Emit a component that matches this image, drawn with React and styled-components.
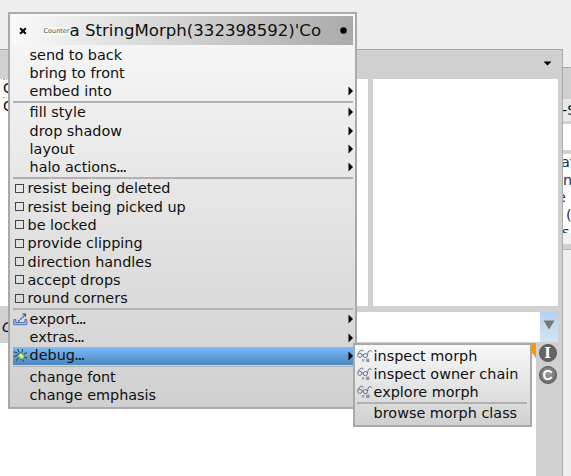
import React from "react";
import styled, { createGlobalStyle, css } from "styled-components";

const Global = createGlobalStyle`
  * { box-sizing: border-box; }
  html, body { margin: 0; height: 476px; overflow: hidden; background: #eeeeee; }
  body { font-family: "DejaVu Sans", sans-serif; color: #101010; }
  svg { display: block; flex: none; }
`;

const Desktop = styled.main`
  position: relative;
  width: 571px;
  height: 476px;
  overflow: hidden;
  background: #eeeeee;
`;

const BackWindow = styled.section`
  position: absolute;
  left: 555px;
  top: 67px;
  width: 30px;
  height: 183px;
  padding-left: 8px;
  border-top: 1px solid #aaaaaa;
  border-bottom: 1px solid #b5b5b5;
  background: #d0d0d0;
  display: grid;
  grid-template-rows: 31px 22px 3px 26px 4px 79px 11px;
  font-size: 14.4px;
`;

const BackPane = styled.div`
  background: ${(p) => p.$fill};
  overflow: hidden;
  white-space: pre;
  line-height: 22px;
`;

const TabLabel = styled.div`
  margin-left: -1px;
`;

const CodeLine = styled.div`
  line-height: 17.5px;
  height: 17.5px;
  margin-left: ${(p) => p.$shift || 0}px;
  color: #17304f;
`;

const CodeQuote = styled.span`
  color: #d7a83a;
`;

const Browser = styled.section`
  position: absolute;
  left: -4px;
  top: 49px;
  width: 567px;
  height: 440px;
  border-top: 1px solid #a8a8a8;
  border-right: 1px solid #aaaaaa;
  background: #d0d0d0;
`;

const BrowserTitle = styled.header`
  height: 29px;
  display: flex;
  align-items: center;
  justify-content: flex-end;
  padding: 0 10px 2px 0;
`;

const Panes = styled.div`
  display: grid;
  grid-template-columns: 372px 185px;
  gap: 5px;
  height: 227px;
`;

const Pane = styled.div`
  background: #ffffff;
  padding-left: ${(p) => (p.$list ? 7 : 0)}px;
`;

const ListEntry = styled.div`
  height: 18px;
  width: 30px;
  border-top: 1px dotted #aaaaaa;
  font-size: 14.4px;
  line-height: 17px;
`;

const SearchRow = styled.div`
  display: grid;
  grid-template-columns: 200px 344px 18px;
  height: 37px;
  padding: 6px 0 5px;
  font-size: 14.4px;
  font-style: italic;
`;

const SearchLabel = styled.div`
  padding-left: 6px;
  line-height: 30px;
`;

const SearchInput = styled.div`
  background: #ffffff;
`;

const DropButton = styled.div`
  display: grid;
  place-items: center;
  padding-bottom: 4px;
  background: linear-gradient(#b2d2f4, #d6e4f0);
`;

const Editor = styled.div`
  display: grid;
  grid-template-columns: 540px 26px;
  height: 145px;
`;

const CodeArea = styled.div`
  background: linear-gradient(#f8fbff, #ffffff 24px);
  display: flex;
  justify-content: flex-end;
`;

const SideButtons = styled.div`
  display: flex;
  flex-direction: column;
  align-items: center;
  gap: 4px;
  padding: 1px 3px 0 0;
`;

const menuFrame = css`
  position: absolute;
  border: 2px solid #a9a9a9;
  background: linear-gradient(#f8f8f8, #d0d0d0);
  display: flex;
  flex-direction: column;
  gap: 1px;
`;

const Menu = styled.section`
  ${menuFrame}
  left: 8px;
  top: 12px;
  width: 349px;
  height: 397px;
  padding: 2px 2px 0 3px;
`;

const Submenu = styled.section`
  ${menuFrame}
  left: 353px;
  top: 343px;
  width: 179px;
  height: 84px;
  padding: 2px 3px 0 2px;
`;

const MenuTitle = styled.header`
  height: 29px;
  flex: none;
  display: flex;
  align-items: center;
  padding: 0 6px;
  background: linear-gradient(90deg, #f9f9f9, #aaaaaa);
  white-space: nowrap;
`;

const Thumbnail = styled.span`
  font-size: 6.5px;
  color: #555555;
  background: #f6f6f6;
  margin-left: 16.5px;
  width: 26px;
  line-height: 8px;
`;

const TitleText = styled.h1`
  flex: 1;
  margin: 0;
  font-size: 16.6px;
  font-weight: 400;
  line-height: 28px;
`;

const Row = styled.div`
  height: 17.33px;
  flex: none;
  display: flex;
  align-items: center;
  white-space: nowrap;
  font-size: 14.4px;
  line-height: 17px;
  background: ${(p) => (p.$active ? "linear-gradient(#7dbdfb, #4a86c0)" : "none")};
`;

const IconSlot = styled.span`
  width: ${(p) => (p.$check ? 14.5 : 16.6)}px;
  flex: none;
`;

const Label = styled.span`
  flex: 1;
  padding-top: 1.2px;
`;

const Ellipsis = styled.span`
  font-size: 9.6px;
  font-weight: bold;
`;

const CheckBox = styled.span`
  display: block;
  width: 9px;
  height: 9px;
  margin-left: 2px;
  border: 1px solid #444444;
`;

const Separator = styled.div`
  flex: none;
  height: 1.67px;
  background: #b1b1b1;
`;

const RightArrow = () => (
  <svg width="5" height="10" viewBox="0 0 5 10"><path d="M.5 .5 5 5 .5 9.5Z" fill="#000" /></svg>
);

const ExportIcon = () => (
  <svg width="15" height="13" viewBox="0 0 15 13" fill="none">
    <path d="M.8 6.5h2v3h9v-3h2v5.2H.8Z" fill="#a9c1e6" stroke="#4d75b2" />
    <path d="m5 8.6 6.5-6" stroke="#31578d" strokeWidth="1.4" strokeDasharray="2 1" />
    <path d="M9 .6h4v4Z" fill="#31578d" />
  </svg>
);

const BugIcon = () => (
  <svg width="15" height="15" viewBox="0 0 15 15" fill="none">
    <path d="M4.5 5 .8 3.8M4 7.5.6 8.6M5 10l-2 3M6 4 4.6 1M9 4.5 9.6 1M11 6l3-1.5M11 9l3 1M9 11l1.5 2.6" stroke="#293d38" />
    <ellipse cx="8.2" cy="8.2" rx="4" ry="3.1" transform="rotate(40 8.2 8.2)" fill="#91c86d" stroke="#4c784b" strokeWidth=".8" />
    <ellipse cx="8.2" cy="7.9" rx="2.2" ry="1.4" transform="rotate(40 8.2 7.9)" fill="#dcf5bd" />
    <path d="M4.5 7.2 7.3 4.8" stroke="#466b48" />
  </svg>
);

const GlassesIcon = () => (
  <svg width="15" height="14" viewBox="0 0 15 14" fill="none" stroke="#5a7190" strokeWidth=".95">
    <circle cx="2.8" cy="6.3" r="2.1" />
    <circle cx="8.4" cy="6.6" r="2.1" />
    <path d="M.9 5.2C1.7 2.7 4 .7 5.4 1.1c.7.2.7.9.3 1.6M4.9 6l1.4.2M10.5 6.6c.2-2.7.7-5 2.3-5 1.2 0 1.6.7 1.5 1.5" />
    <path d="m5 10 2.2 2.6m0-2.6L5 12.6M9.7 10h2.2v2.6H9.7zM9.7 11.3h2.2" strokeWidth=".7" />
  </svg>
);

const RoundBadge = styled.span`
  width: 18px;
  height: 18px;
  border: 1.5px solid #555555;
  border-radius: 50%;
  background: radial-gradient(circle at 50% 40%, ${(p) => p.$tone}, #606060);
  color: #ffffff;
  font: bold 14px/16px ${(p) => p.$face}, sans-serif;
  display: flex;
  justify-content: center;
`;

const icons = { export: ExportIcon, bug: BugIcon, glasses: GlassesIcon, check: CheckBox };

const mainItems = [
  ["send to back"], ["bring to front"], ["embed into", null, true], null,
  ["fill style", null, true], ["drop shadow", null, true], ["layout", null, true], ["halo actions…", null, true], null,
  ["resist being deleted", "check"], ["resist being picked up", "check"], ["be locked", "check"],
  ["provide clipping", "check"], ["direction handles", "check"], ["accept drops", "check"], ["round corners", "check"], null,
  ["export…", "export", true], ["extras…", null, true], ["debug…", "bug", true, true], null,
  ["change font"], ["change emphasis"],
];

const subItems = [
  ["inspect morph", "glasses"], ["inspect owner chain", "glasses"], ["explore morph", "glasses"], null,
  ["browse morph class"],
];

function MenuItems({ items }) {
  return items.map((item, i) => {
    if (!item) return <Separator key={i} />;
    const [label, icon, arrow, active] = item;
    const Icon = icons[icon];
    const hasEllipsis = label.endsWith("…");
    return (
      <Row key={i} $active={active}>
        <IconSlot $check={icon === "check"}>{Icon && <Icon />}</IconSlot>
        <Label>
          {hasEllipsis ? label.slice(0, -1) : label}
          {hasEllipsis && <Ellipsis>…</Ellipsis>}
        </Label>
        {arrow && <RightArrow />}
      </Row>
    );
  });
}

export default function App() {
  return (
    <Desktop>
      <Global />
      <BackWindow>
        <BackPane $fill="#d0d0d0" />
        <BackPane $fill="#e8e8e8"><TabLabel>-S</TabLabel></BackPane>
        <BackPane $fill="#d0d0d0" />
        <BackPane $fill="#ffffff" />
        <BackPane $fill="#d0d0d0" />
        <BackPane $fill="#ffffff">
          <CodeLine $shift={-2}>at</CodeLine>
          <CodeLine>n</CodeLine>
          <CodeLine $shift={-6}>e<CodeQuote> (</CodeQuote></CodeLine>
          <CodeLine $shift={3}>(</CodeLine>
          <CodeLine $shift={-1}>s</CodeLine>
        </BackPane>
        <BackPane $fill="#f1f1f1" />
      </BackWindow>
      <Browser>
        <BrowserTitle>
          <svg width="9" height="5" viewBox="0 0 9 5"><path d="M.5.5h8l-4 4Z" fill="#000" /></svg>
        </BrowserTitle>
        <Panes>
          <Pane $list><ListEntry>C</ListEntry><ListEntry>C</ListEntry></Pane>
          <Pane />
        </Panes>
        <SearchRow>
          <SearchLabel>C</SearchLabel>
          <SearchInput />
          <DropButton>
            <svg width="12" height="10" viewBox="0 0 12 10"><path d="M.5.5h11L6 9.5Z" fill="#777" /></svg>
          </DropButton>
        </SearchRow>
        <Editor>
          <CodeArea>
            <svg width="9" height="17" viewBox="0 0 9 17"><path d="M0 0h9v16Q7 9 0 9Z" fill="#ff9900" /></svg>
          </CodeArea>
          <SideButtons>
            <RoundBadge $tone="#666666" $face="'DejaVu Serif'">I</RoundBadge>
            <RoundBadge $tone="#999999" $face="'Liberation Sans'">C</RoundBadge>
          </SideButtons>
        </Editor>
      </Browser>
      <Menu>
        <MenuTitle>
          <svg width="8" height="8" viewBox="0 0 8 8"><path d="m1.2 1.2 5.6 5.6m0-5.6L1.2 6.8" stroke="#000" strokeWidth="2" /></svg>
          <Thumbnail>Counter</Thumbnail>
          <TitleText>a StringMorph(332398592)'Co</TitleText>
          <svg width="7" height="7" viewBox="0 0 7 7"><circle cx="3.5" cy="3.5" r="3.2" /></svg>
        </MenuTitle>
        <MenuItems items={mainItems} />
      </Menu>
      <Submenu><MenuItems items={subItems} /></Submenu>
    </Desktop>
  );
}
